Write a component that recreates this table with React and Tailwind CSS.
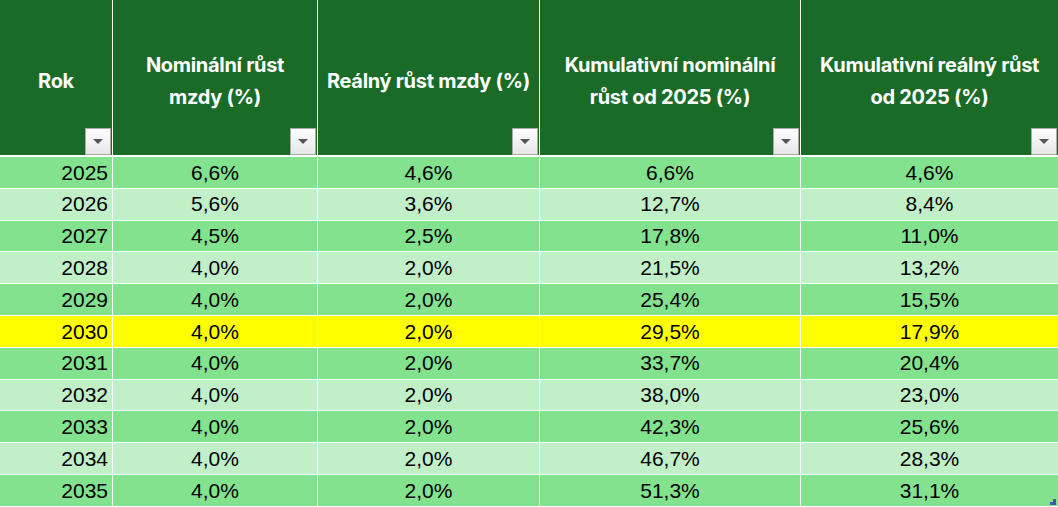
import React from "react";

const columns = [
  { title: "Rok", width: "w-[112px]" },
  { title: "Nominální růst mzdy (%)", width: "w-[205px]" },
  { title: "Reálný růst mzdy (%)", width: "w-[222px]" },
  { title: "Kumulativní nominální růst od 2025 (%)", width: "w-[261px]" },
  { title: "Kumulativní reálný růst od 2025 (%)", width: "w-[258px]" },
];

const rows = [
  ["2025", "6,6%", "4,6%", "6,6%", "4,6%"],
  ["2026", "5,6%", "3,6%", "12,7%", "8,4%"],
  ["2027", "4,5%", "2,5%", "17,8%", "11,0%"],
  ["2028", "4,0%", "2,0%", "21,5%", "13,2%"],
  ["2029", "4,0%", "2,0%", "25,4%", "15,5%"],
  ["2030", "4,0%", "2,0%", "29,5%", "17,9%"],
  ["2031", "4,0%", "2,0%", "33,7%", "20,4%"],
  ["2032", "4,0%", "2,0%", "38,0%", "23,0%"],
  ["2033", "4,0%", "2,0%", "42,3%", "25,6%"],
  ["2034", "4,0%", "2,0%", "46,7%", "28,3%"],
  ["2035", "4,0%", "2,0%", "51,3%", "31,1%"],
];

function FilterButton() {
  return (
    <div className="absolute right-[1px] bottom-0 w-[26px] h-[27px] border border-[#a9a9a9] bg-gradient-to-b from-[#ffffff] to-[#e6e6e6] flex items-center justify-center">
      <svg width="10" height="6" viewBox="0 0 10 6">
        <path d="M0 0 L10 0 L5 5 Z" fill="#555555" />
      </svg>
    </div>
  );
}

function rowColor(year, i) {
  if (year === "2030") return "bg-[#ffff00]";
  return i % 2 === 0 ? "bg-[#83e28e]" : "bg-[#c0efc8]";
}

export default function App() {
  return (
    <div className="relative w-[1058px] h-[507px] overflow-hidden bg-white">
      {/* Header */}
      <div className="flex h-[157px] border-b-2 border-white bg-[#1a6b27]">
        {columns.map((col, i) => (
          <div
            key={col.title}
            className={`${col.width} relative shrink-0 flex items-center justify-center px-[6px] pt-[6px] ${
              i > 0 ? "border-l border-white" : ""
            }`}
          >
            <span
              className="text-white text-[20px] font-bold leading-[32px] tracking-[-0.3px] text-center"
              style={{ fontFamily: "Inter, 'Noto Sans', sans-serif" }}
            >
              {col.title}
            </span>
            <FilterButton />
          </div>
        ))}
      </div>

      {/* Data rows */}
      {rows.map((row, r) => (
        <div
          key={row[0]}
          className={`flex h-[31.8px] border-b border-white text-black text-[21px] ${rowColor(row[0], r)}`}
          style={{ fontFamily: "'Liberation Sans', Arial, sans-serif" }}
        >
          {row.map((cell, c) => (
            <div
              key={c}
              className={`${columns[c].width} shrink-0 flex items-center ${
                c === 0 ? "justify-end pr-[4px]" : "justify-center border-l border-white"
              }`}
            >
              {cell}
            </div>
          ))}
        </div>
      ))}

      {/* resize handle */}
      <div className="absolute right-[2px] bottom-[2px] w-[6px] h-[6px]">
        <svg width="6" height="6" viewBox="0 0 6 6">
          <path d="M3 0 H6 V6 H0 V3 H3 Z" fill="#3f5aa6" />
        </svg>
      </div>
    </div>
  );
}
